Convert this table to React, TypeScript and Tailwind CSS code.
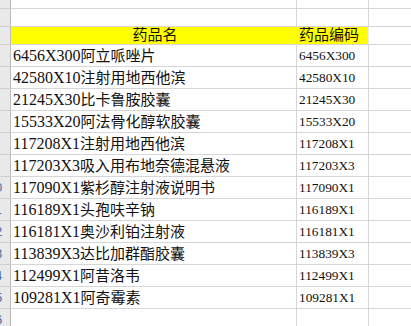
const rows = [
  ["6456X300", "阿立哌唑片"],
  ["42580X10", "注射用地西他滨"],
  ["21245X30", "比卡鲁胺胶囊"],
  ["15533X20", "阿法骨化醇软胶囊"],
  ["117208X1", "注射用地西他滨"],
  ["117203X3", "吸入用布地奈德混悬液"],
  ["117090X1", "紫杉醇注射液说明书"],
  ["116189X1", "头孢呋辛钠"],
  ["116181X1", "奥沙利铂注射液"],
  ["113839X3", "达比加群酯胶囊"],
  ["112499X1", "阿昔洛韦"],
  ["109281X1", "阿奇霉素"],
];

const serif = "font-['Liberation_Serif','Noto_Sans_CJK_SC',serif]";

const RowHead = ({ n }: { n?: number }) => (
  <div className="w-[11px] shrink-0 bg-[#e9e9e9] border-r border-b border-r-[#bdbdbd] border-b-[#cfcfcf] overflow-hidden flex justify-end items-end">
    {n !== undefined && (
      <div className="w-[30px] shrink-0 text-center text-[13px] leading-[20px] text-[#4d6a9c] font-['Liberation_Sans',sans-serif]">
        {n}
      </div>
    )}
  </div>
);

const DataRow = ({ n, code, name }: { n: number; code: string; name: string }) => (
  <div className="flex h-[22px]">
    <RowHead n={n} />
    <div className={`w-[286px] shrink-0 border-r border-b border-[#d6d6d6] flex items-end pl-[2px] pb-[1px] text-[15px] leading-[18px] text-[#111] whitespace-nowrap ${serif}`}>
      <span className="text-[16px]">{code}</span>
      {name}
    </div>
    <div className="w-[72px] shrink-0 border-r border-b border-[#d6d6d6] flex items-end pl-[2px] pb-[2px] text-[13.33px] leading-[16px] text-[#111] font-['Liberation_Serif',serif]">
      {code}
    </div>
    <div className="flex-1 border-b border-[#d6d6d6]" />
  </div>
);

const EmptyRow = ({ h, n }: { h: string; n?: number }) => (
  <div className={`flex ${h}`}>
    <RowHead n={n} />
    <div className="w-[286px] shrink-0 border-r border-b border-[#d6d6d6]" />
    <div className="w-[72px] shrink-0 border-r border-b border-[#d6d6d6]" />
    <div className="flex-1 border-b border-[#d6d6d6]" />
  </div>
);

export default function App() {
  return (
    <div className="w-[411px] h-[326px] overflow-hidden bg-white">
      <EmptyRow h="h-[9px]" />
      <EmptyRow h="h-[18px]" n={2} />
      <div className="flex h-[18px]">
        <RowHead n={3} />
        <div className={`w-[286px] shrink-0 bg-[#ffff00] border-b border-[#d6d6d6] flex items-end justify-center pl-[2px] text-[15px] leading-[17px] text-[#111] ${serif}`}>
          药品名
        </div>
        <div className={`w-[72px] shrink-0 bg-[#ffff00] border-b border-r border-b-[#d6d6d6] border-r-[#ececec] flex items-end pl-[2px] text-[15px] leading-[17px] text-[#111] whitespace-nowrap ${serif}`}>
          药品编码
        </div>
        <div className="flex-1 border-b border-[#d6d6d6]" />
      </div>
      {rows.map(([code, name], i) => (
        <DataRow key={code} n={i + 4} code={code} name={name} />
      ))}
      <EmptyRow h="h-[22px]" n={16} />
    </div>
  );
}
